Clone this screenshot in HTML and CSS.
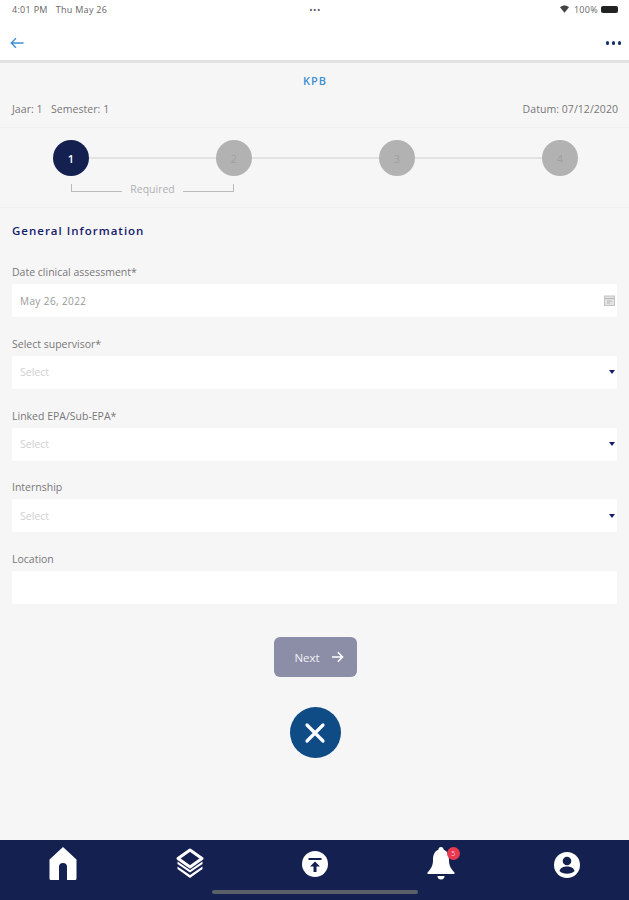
FILE: index.html
```html
<!DOCTYPE html>
<html lang="en">
<head>
  <meta charset="UTF-8">
  <title>KPB - General Information</title>
  <link rel="stylesheet" href="styles.css">
</head>
<body>
  <div class="status-bar">
    <div class="status-time">4:01 PM&nbsp;&nbsp; Thu May 26</div>
    <div class="status-dots">•••</div>
    <div class="status-right">
      <svg class="wifi" viewBox="0 0 12 10" width="9" height="8"><path d="M0 2.5C3.4-.6 8.6-.6 12 2.5L6 10z" fill="#444"/></svg>
      <span>100%</span>
      <span class="battery"></span>
    </div>
  </div>

  <header class="nav-bar">
    <svg class="back-icon" viewBox="0 0 14 12" width="14" height="12"><path d="M13.5 6H1.5M6 1.2 1.2 6 6 10.8" fill="none" stroke="#3f8fd0" stroke-width="1.3"/></svg>
    <div class="more-dots"><i></i><i></i><i></i></div>
  </header>

  <div class="title-block">
    <div class="page-title">KPB</div>
    <div class="meta-row">
      <span>Jaar: 1&nbsp;&nbsp; Semester: 1</span>
      <span>Datum: 07/12/2020</span>
    </div>
  </div>

  <div class="stepper-block">
    <div class="stepper">
      <div class="step step-active">1</div>
      <div class="step-line"></div>
      <div class="step">2</div>
      <div class="step-line"></div>
      <div class="step">3</div>
      <div class="step-line"></div>
      <div class="step">4</div>
    </div>
    <div class="required-row">
      <span class="bracket bracket-left"></span>
      <span class="required-text">Required</span>
      <span class="bracket bracket-right"></span>
    </div>
  </div>

  <main class="form">
    <h2 class="form-title">General Information</h2>

    <div class="field">
      <label>Date clinical assessment*</label>
      <div class="input">
        <span class="input-value">May 26, 2022</span>
        <svg viewBox="0 0 11 11" width="11" height="11"><rect x=".5" y="1" width="10" height="9.5" fill="#e2e2e2" stroke="#c4c4c4"/><path d="M1 3.5h9M3 6h5M3 8h3" stroke="#b8b8b8"/></svg>
      </div>
    </div>
    <div class="field">
      <label>Select supervisor*</label>
      <div class="input">
        <span class="input-hint">Select</span>
        <span class="caret"></span>
      </div>
    </div>
    <div class="field">
      <label>Linked EPA/Sub-EPA*</label>
      <div class="input">
        <span class="input-hint">Select</span>
        <span class="caret"></span>
      </div>
    </div>
    <div class="field">
      <label>Internship</label>
      <div class="input">
        <span class="input-hint">Select</span>
        <span class="caret"></span>
      </div>
    </div>
    <div class="field">
      <label>Location</label>
      <div class="input"></div>
    </div>

    <div class="actions">
      <button class="next-btn">
        Next
        <svg viewBox="0 0 13 12" width="13" height="12"><path d="M1 6h10.5M6.8 1.2 11.6 6 6.8 10.8" fill="none" stroke="#fff" stroke-width="1.5"/></svg>
      </button>
      <button class="close-btn">
        <svg viewBox="0 0 22 22" width="22" height="22"><path d="M3 3 19 19M19 3 3 19" stroke="#fff" stroke-width="3.2" stroke-linecap="round"/></svg>
      </button>
    </div>
  </main>

  <nav class="tab-bar">
    <svg class="tab-home" viewBox="0 0 28 33" width="28" height="33"><path d="M14 0 27.500 12.500V31.500Q27.500 33 26 33H18V20A4 4 0 0 0 10 20V33H2Q.5 33 .5 31.500V12.500z" fill="#fff"/></svg>
    <svg class="tab-layers" viewBox="0 0 28 31" width="28" height="31"><path d="M14 2 26 10.500 14 19 2 10.500z" fill="#14204f" stroke="#fff" stroke-width="3" stroke-linejoin="round"/><path d="M1.500 13.500V16L14 24.500 26.500 16V13.500L14 22zM1.500 18.500V21L14 30 26.500 21V18.500L14 27z" fill="#fff"/></svg>
    <svg class="tab-upload" viewBox="0 0 26 26" width="26" height="26"><circle cx="13" cy="13" r="13" fill="#fff"/><path d="M6.500 7h13v2h-13zM13 10.500 18 15.500H14.500V21H11.500V15.500H8z" fill="#14204f"/></svg>
    <div class="bell-wrap">
      <svg viewBox="0 0 28 33" width="28" height="33"><path d="M14 0c1.700 0 2.600 1.100 2.700 2.800C20.800 4.300 22 8.500 22 13c0 5 1.500 8.500 5.500 12.500V27H.5v-1.500C4.500 21.500 6 18 6 13c0-4.500 1.200-8.700 5.300-10.200C11.400 1.100 12.300 0 14 0z" fill="#fff"/><path d="M10.500 29h7a3.500 3.500 0 0 1-7 0z" fill="#fff"/></svg>
      <span class="badge">5</span>
    </div>
    <svg class="tab-profile" viewBox="0 0 26 26" width="26" height="26"><circle cx="13" cy="13" r="13" fill="#fff"/><circle cx="13" cy="9" r="4.300" fill="#14204f"/><path d="M5.500 19c1-3.500 4-4.500 7.500-4.500s6.500 1 7.500 4.500c-1.500 1.700-4.500 2.800-7.500 2.800S7 20.700 5.500 19z" fill="#14204f"/></svg>
    <div class="home-indicator"></div>
  </nav>
</body>
</html>
```

FILE: styles.css
```css
html,
body {
  margin: 0;
  height: 900px;
  overflow: hidden;
}

body {
  display: flex;
  flex-direction: column;
  font-family: "Open Sans", sans-serif;
  background: #f7f6f7;
  color: #666;
}

.status-bar {
  display: flex;
  justify-content: space-between;
  align-items: center;
  height: 20px;
  padding: 0 11px 2px 12px;
  box-sizing: border-box;
  background: #fff;
  font-size: 9px;
  letter-spacing: 0.3px;
  color: #666;
}

.status-time,
.status-right {
  width: 120px;
}

.status-dots {
  font-size: 9px;
  letter-spacing: 0.5px;
  color: #555;
}

.status-right {
  display: flex;
  justify-content: flex-end;
  align-items: center;
  gap: 3px;
}

.wifi {
  margin-right: 2px;
}

.battery {
  width: 17px;
  height: 7px;
  background: #222;
  border-radius: 2px;
}

.nav-bar {
  display: flex;
  justify-content: space-between;
  align-items: center;
  height: 43px;
  padding: 6px 8px 0 10px;
  box-sizing: border-box;
  background: #fff;
  border-bottom: 3px solid #e2e2e2;
}

.more-dots {
  display: flex;
  gap: 2.5px;
}

.more-dots i {
  width: 3.5px;
  height: 3.5px;
  border-radius: 50%;
  background: #14306b;
}

.title-block {
  height: 64px;
  padding: 0 11px 0 12px;
  border-bottom: 1px solid #efefef;
}

.page-title {
  padding-top: 10px;
  text-align: center;
  font-size: 11px;
  font-weight: 600;
  letter-spacing: 1px;
  color: #3f8fd0;
}

.meta-row {
  display: flex;
  justify-content: space-between;
  margin-top: 14px;
  font-size: 10.5px;
  letter-spacing: 0.05px;
  color: #777;
}

.stepper-block {
  height: 80px;
  border-bottom: 1px solid #efefef;
  padding: 12px 51px 0 53px;
  box-sizing: border-box;
}

.stepper {
  display: flex;
  align-items: center;
}

.step {
  display: flex;
  justify-content: center;
  align-items: center;
  flex: none;
  width: 36px;
  height: 36px;
  border-radius: 50%;
  background: #b2b2b2;
  font-size: 11px;
  color: #a0a0a0;
}

.step-active {
  background: #14204f;
  color: #fff;
  font-weight: 600;
}

.step-line {
  flex: 1;
  height: 2px;
  background: #e2e2e2;
}

.required-row {
  display: flex;
  align-items: flex-end;
  width: 163px;
  height: 10px;
  margin: 6px 0 0 18px;
  color: #b0b0b0;
  font-size: 10.5px;
}

.bracket {
  flex: 1;
  height: 7px;
  border-bottom: 1px solid #bbb;
}

.bracket-left {
  border-left: 1px solid #bbb;
}

.bracket-right {
  border-right: 1px solid #bbb;
}

.required-text {
  padding: 0 8px;
  line-height: 10px;
  position: relative;
  top: 2px;
}

.form {
  flex: 1;
  padding: 0 12px;
}

.form-title {
  margin: 15px 0 25px;
  font-size: 11.5px;
  line-height: 16px;
  font-weight: 600;
  letter-spacing: 1px;
  color: #14206b;
}

.field {
  margin-bottom: 18.75px;
}

.field label {
  display: block;
  height: 16px;
  margin-bottom: 4px;
  font-size: 10.5px;
  line-height: 16px;
  color: #777;
}

.input {
  display: flex;
  justify-content: space-between;
  align-items: center;
  height: 33px;
  padding: 0 1px 0 8px;
  background: #fff;
  border-radius: 2px;
  font-size: 10px;
}

.input svg {
  margin-right: 1px;
}

.input-value {
  color: #999;
  letter-spacing: 0.4px;
}

.input-hint {
  font-size: 10.5px;
  color: #d0d0d0;
}

.caret {
  width: 0;
  height: 0;
  margin-right: 1px;
  border-left: 3px solid transparent;
  border-right: 3px solid transparent;
  border-top: 4px solid #14206b;
}

.actions {
  display: flex;
  flex-direction: column;
  align-items: center;
  gap: 30px;
  margin: 33px 0 0 1px;
}

.next-btn {
  display: flex;
  justify-content: center;
  align-items: center;
  gap: 11px;
  width: 83px;
  height: 40px;
  padding: 0 0 0 8px;
  border: none;
  border-radius: 6px;
  background: #8c8ea8;
  color: #f0f0f4;
  font-family: inherit;
  font-size: 11.5px;
}

.close-btn {
  display: flex;
  justify-content: center;
  align-items: center;
  width: 51px;
  height: 51px;
  padding: 0;
  border: none;
  border-radius: 50%;
  background: #0f4c86;
}

.tab-bar {
  position: relative;
  display: flex;
  justify-content: space-between;
  align-items: flex-start;
  height: 60px;
  padding: 7px 49px 0;
  box-sizing: border-box;
  background: #14204f;
}

.tab-layers {
  margin-top: 1px;
}

.tab-upload {
  margin-top: 4px;
  margin-left: -2px;
}

.tab-profile {
  margin-top: 5px;
}

.bell-wrap {
  position: relative;
  height: 33px;
}

.badge {
  position: absolute;
  top: 0;
  right: -5px;
  width: 13px;
  height: 13px;
  border-radius: 50%;
  background: #e8394f;
  color: #fbd;
  font-size: 7px;
  line-height: 13px;
  text-align: center;
}

.home-indicator {
  position: absolute;
  left: 212px;
  bottom: 6px;
  width: 206px;
  height: 4px;
  border-radius: 2px;
  background: #5b6068;
}
```
